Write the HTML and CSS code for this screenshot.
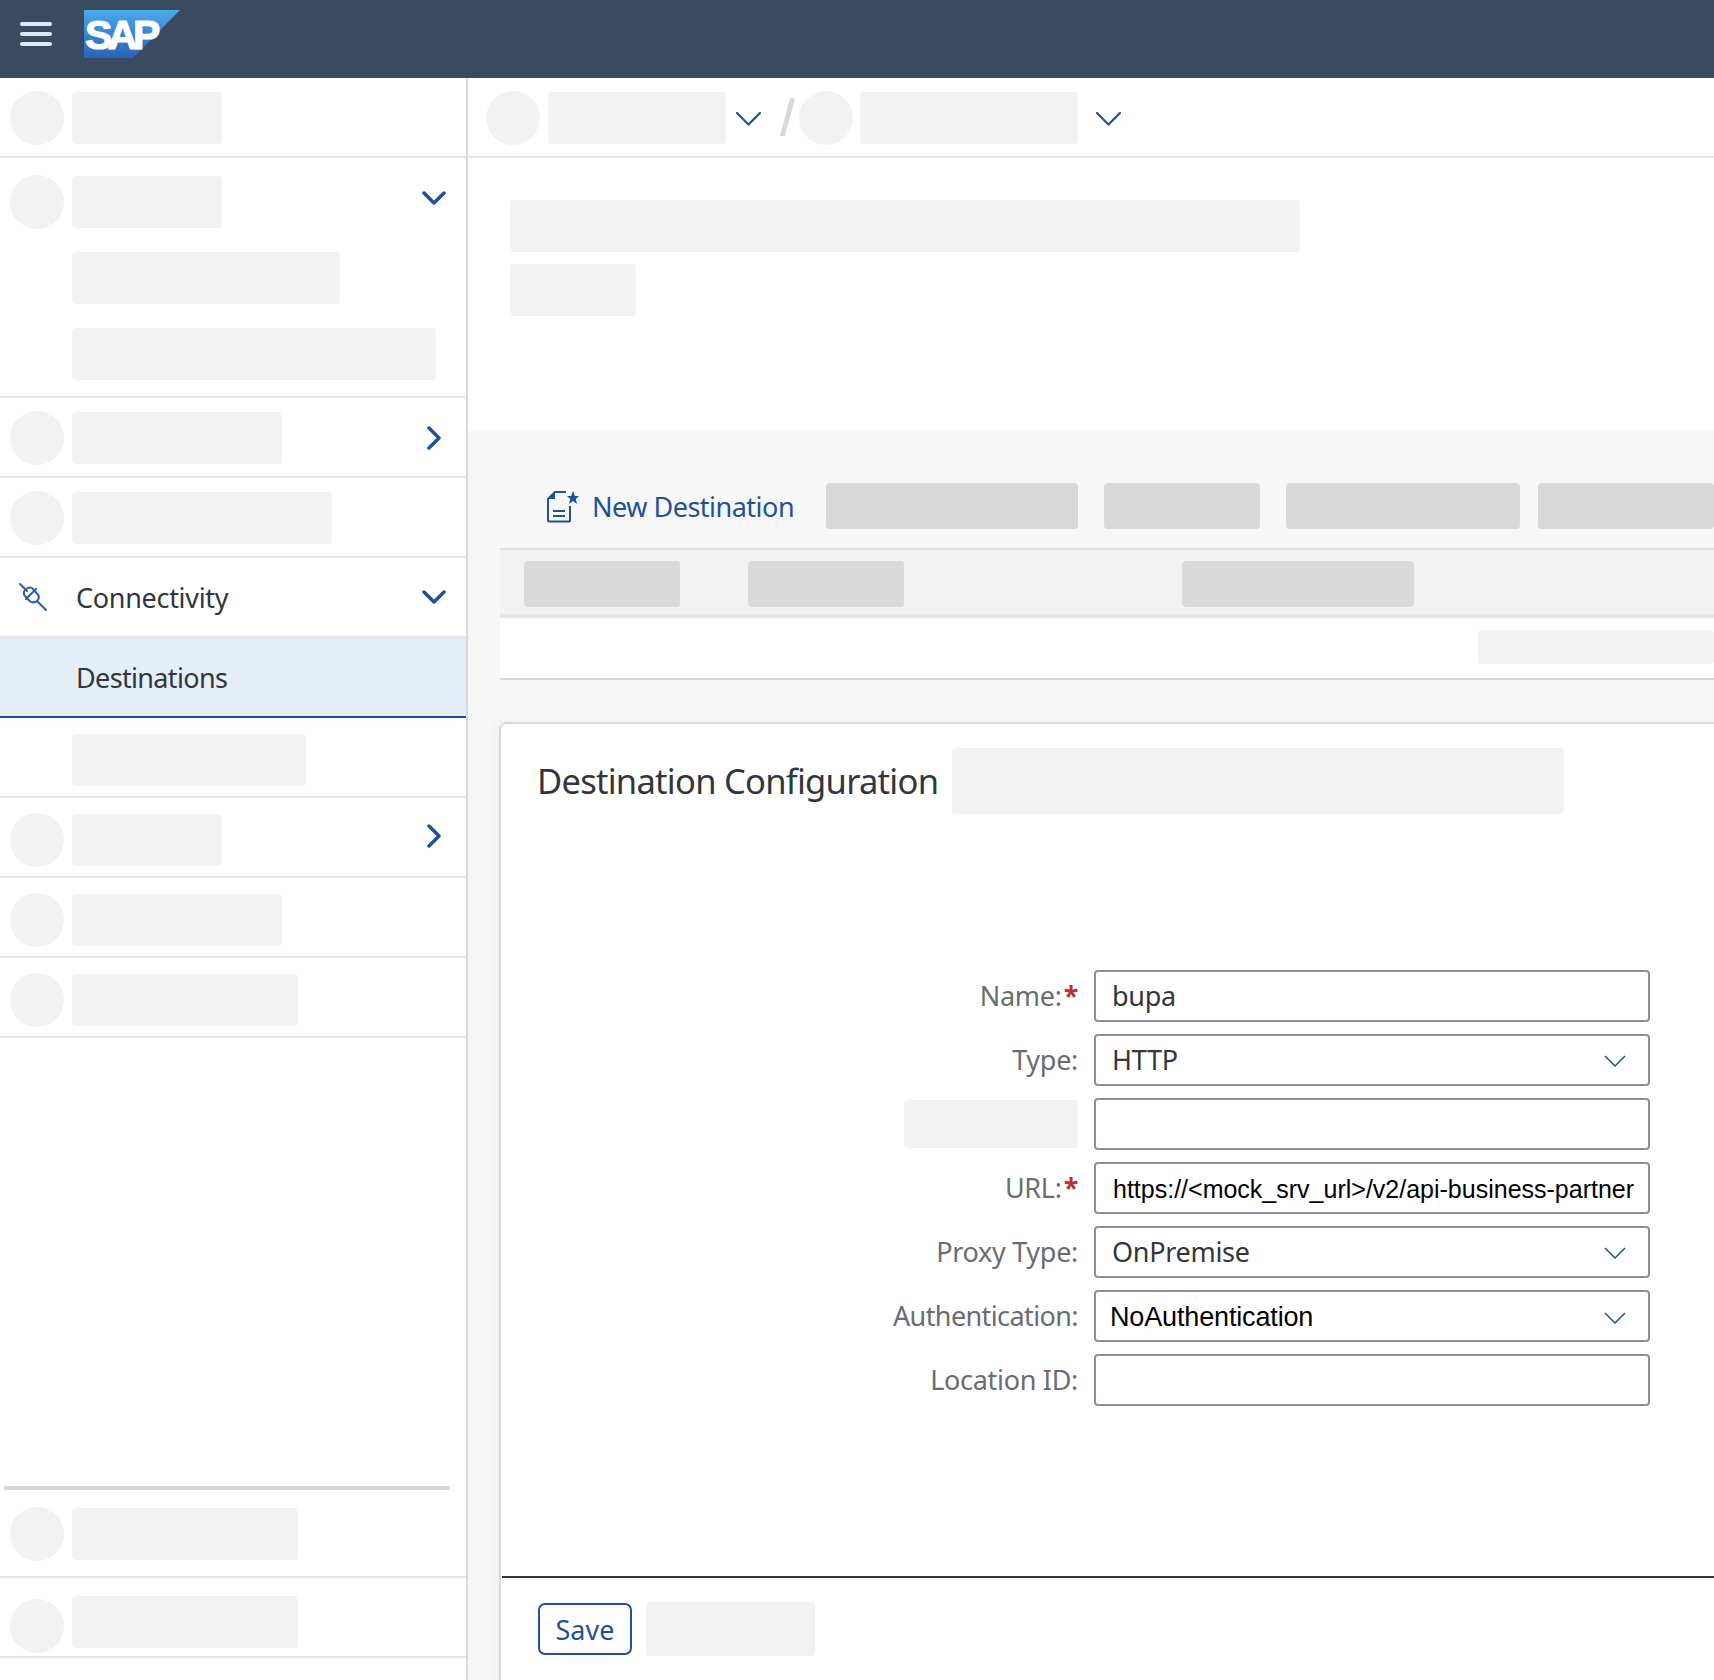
FILE: index.html
```html
<!DOCTYPE html>
<html lang="en">

<head>
    <meta charset="UTF-8">
    <meta name="viewport" content="width=device-width, initial-scale=1.0">
    <title>Destinations</title>
    <link rel="stylesheet" href="styles.css">
</head>

<body>

    <header class="shell-bar">
        <div class="menu-btn"><span></span><span></span><span></span></div>
        <div class="logo">
            <svg width="96" height="48" viewBox="0 0 96 48">
                <defs>
                    <linearGradient id="logoFill" x1="0" y1="0" x2="0" y2="1">
                        <stop offset="0" stop-color="#4aa9e9"></stop>
                        <stop offset="1" stop-color="#2b62b8"></stop>
                    </linearGradient>
                </defs>
                <polygon points="0,0 96,0 49,48 0,48" fill="url(#logoFill)"></polygon>
                <text class="logo-text" x="1" y="38.500">SAP</text>
            </svg>
        </div>
    </header>

    <div class="layout">
        <nav class="sidebar">
            <div class="nav-row">
                <span class="dot"></span><span class="ph w150"></span>
            </div>
            <div class="nav-group">
                <div class="nav-head">
                    <span class="dot"></span><span class="ph w150"></span>
                    <svg class="nav-arrow" width="24" height="14" viewBox="0 0 24 14"><path d="M2 2l10 10L22 2"></path></svg>
                </div>
                <div class="nav-sub"><span class="ph w268"></span></div>
                <div class="nav-sub"><span class="ph w364"></span></div>
            </div>
            <div class="nav-row">
                <span class="dot"></span><span class="ph w210"></span>
                <svg class="nav-arrow nav-arrow-right" width="14" height="24" viewBox="0 0 14 24"><path d="M2 2l10 10L2 22"></path></svg>
            </div>
            <div class="nav-row">
                <span class="dot"></span><span class="ph w260"></span>
            </div>
            <div class="nav-row nav-open">
                <svg class="plug" width="30" height="30" viewBox="0 0 30 30">
                    <path d="M2 2l7 7M20 20l8 8"></path>
                    <path d="M9 6.5c-2.5 1.5-4 4-2.5 7l5 5.500c3 2 6 1.500 8-.5 2-2.500 1.500-5-.5-7L14 6c-1.500-1-3.500-.5-5 .5z"></path>
                    <path d="M8 17L18 7"></path>
                </svg>
                <span class="nav-text">Connectivity</span>
                <svg class="nav-arrow" width="24" height="14" viewBox="0 0 24 14"><path d="M2 2l10 10L22 2"></path></svg>
            </div>
            <div class="nav-row nav-active">
                <span class="nav-text">Destinations</span>
            </div>
            <div class="nav-row nav-low nav-child">
                <span class="ph w234"></span>
            </div>
            <div class="nav-row nav-low">
                <span class="dot"></span><span class="ph w150"></span>
                <svg class="nav-arrow nav-arrow-right" width="14" height="24" viewBox="0 0 14 24"><path d="M2 2l10 10L2 22"></path></svg>
            </div>
            <div class="nav-row nav-low">
                <span class="dot"></span><span class="ph w210"></span>
            </div>
            <div class="nav-row nav-low">
                <span class="dot"></span><span class="ph w226"></span>
            </div>

            <div class="nav-bottom">
                <div class="nav-divider"></div>
                <div class="nav-row">
                    <span class="dot"></span><span class="ph w226"></span>
                </div>
                <div class="nav-row">
                    <span class="dot"></span><span class="ph w226"></span>
                </div>
            </div>
        </nav>

        <main class="content">
            <div class="breadcrumb">
                <span class="dot"></span><span class="ph crumb-a"></span>
                <svg class="crumb-arrow" width="25" height="14" viewBox="0 0 25 14"><path d="M1 1l11.500 11.500L24 1"></path></svg>
                <span class="crumb-slash"></span>
                <span class="dot"></span><span class="ph crumb-b"></span>
                <svg class="crumb-arrow" width="25" height="14" viewBox="0 0 25 14"><path d="M1 1l11.500 11.500L24 1"></path></svg>
            </div>

            <div class="page-title">
                <span class="ph title-a"></span>
                <span class="ph title-b"></span>
            </div>

            <section class="page-body">
                <div class="actions">
                    <a class="new-link">
                        <svg width="33" height="33" viewBox="0 0 33 33">
                            <path class="doc" d="M20 2H9L2 9v21.500a1 1 0 0 0 1 1h20a1 1 0 0 0 1-1V16"></path>
                            <path class="doc-fold" d="M9 2L2 9h7z"></path>
                            <path class="doc" d="M7 21h12M7 26h12"></path>
                            <polygon class="doc-star" points="27,1 28.800,6 33,6 29.800,9 31,14 27,11 23,14 24.200,9 21,6 25.200,6"></polygon>
                        </svg>
                        <span>New Destination</span>
                    </a>
                    <span class="ph-dark act-a"></span>
                    <span class="ph-dark act-b"></span>
                    <span class="ph-dark act-c"></span>
                    <span class="ph-dark act-d"></span>
                </div>

                <div class="table-head">
                    <span class="ph-dark col-a"></span>
                    <span class="ph-dark col-b"></span>
                    <span class="ph-dark col-c"></span>
                </div>
                <div class="table-row">
                    <span class="ph row-a"></span>
                </div>

                <div class="card">
                    <div class="card-head">
                        <h2>Destination Configuration</h2>
                        <span class="ph card-ph"></span>
                    </div>

                    <form class="config-form">
                        <label>Name:<b>*</b></label>
                        <input class="field" type="text" value="bupa">

                        <label>Type:</label>
                        <div class="field select">
                            <span>HTTP</span>
                            <svg width="22" height="12" viewBox="0 0 22 12"><path d="M1 1l10 10L21 1"></path></svg>
                        </div>

                        <span class="ph label-ph"></span>
                        <input class="field" type="text">

                        <label>URL:<b>*</b></label>
                        <input class="field field-url" type="text" value="https://<mock_srv_url>/v2/api-business-partner">

                        <label>Proxy Type:</label>
                        <div class="field select">
                            <span>OnPremise</span>
                            <svg width="22" height="12" viewBox="0 0 22 12"><path d="M1 1l10 10L21 1"></path></svg>
                        </div>

                        <label class="label-tight">Authentication:</label>
                        <div class="field select select-auth">
                            <span>NoAuthentication</span>
                            <svg width="22" height="12" viewBox="0 0 22 12"><path d="M1 1l10 10L21 1"></path></svg>
                        </div>

                        <label>Location ID:</label>
                        <input class="field" type="text">
                    </form>

                    <div class="card-foot">
                        <button class="save-btn" type="button">Save</button>
                        <span class="ph foot-ph"></span>
                    </div>
                </div>
            </section>
        </main>
    </div>

</body>

</html>
```

FILE: styles.css
```css
html,
body {
    margin: 0;
    height: 1680px;
    overflow: hidden;
    background: #fff;
}

body {
    font-family: "Noto Sans", "Open Sans", Arial, sans-serif;
    color: #32363a;
}

/* top bar */
.shell-bar {
    display: flex;
    height: 78px;
    background: #3a4a5f;
}

.menu-btn {
    display: flex;
    flex-direction: column;
    gap: 6px;
    width: 32px;
    margin: 22px 0 0 20px;
}

.menu-btn span {
    height: 4px;
    border-radius: 2px;
    background: #dbe8f8;
}

.logo {
    margin: 10px 0 0 32px;
}

.logo svg {
    display: block;
}

.logo-text {
    font-family: "Liberation Sans", Arial, sans-serif;
    font-size: 41px;
    font-weight: bold;
    letter-spacing: -4.5px;
    fill: #fff;
    stroke: #fff;
    stroke-width: 1.2px;
}

.layout {
    display: flex;
    height: 1602px;
}

/* placeholders */
.dot {
    flex: none;
    width: 54px;
    height: 54px;
    border-radius: 50%;
    background: #f2f2f2;
}

.ph,
.ph-dark {
    display: block;
    flex: none;
    height: 52px;
    border-radius: 4px;
    background: #f2f2f2;
}

.ph-dark {
    height: 46px;
    background: #d9d9d9;
}

.w150 { width: 150px; }
.w210 { width: 210px; }
.w226 { width: 226px; }
.w234 { width: 234px; }
.w260 { width: 260px; }
.w268 { width: 268px; }
.w364 { width: 364px; }

/* side navigation */
.sidebar {
    position: relative;
    flex: none;
    width: 466px;
    border-right: 2px solid #d9d9d9;
}

.nav-row {
    display: flex;
    align-items: center;
    gap: 8px;
    box-sizing: border-box;
    height: 80px;
    padding: 2px 0 0 10px;
    border-bottom: 2px solid #e5e5e5;
}

.nav-low {
    padding-top: 6px;
}

.nav-low .nav-arrow {
    margin-bottom: 9px;
}

.nav-group {
    box-sizing: border-box;
    height: 240px;
    padding-top: 17px;
    border-bottom: 2px solid #e5e5e5;
}

.nav-head {
    display: flex;
    align-items: center;
    gap: 8px;
    margin-bottom: -1px;
    padding-left: 10px;
}

.nav-head .nav-arrow {
    margin-bottom: 8px;
}

.nav-sub {
    margin: 24px 0 0 72px;
}

.nav-arrow {
    margin-left: auto;
    margin-right: 20px;
    fill: none;
    stroke: #1f5199;
    stroke-width: 3.500;
    stroke-linecap: round;
    stroke-linejoin: round;
}

.nav-arrow-right {
    margin-right: 25px;
}

.nav-open {
    padding: 0 0 0 18px;
}

.plug {
    fill: none;
    stroke: #2a5ea8;
    stroke-width: 2;
    stroke-linecap: round;
}

.nav-text {
    font-size: 27px;
    letter-spacing: -0.3px;
}

.nav-open .nav-text {
    margin-left: 20px;
}

.nav-active {
    padding: 0 0 0 76px;
    background: #e5eef7;
    border-bottom-color: #1f5199;
}

.nav-active .nav-text {
    letter-spacing: -0.65px;
}

.nav-child {
    padding-left: 72px;
}

.nav-bottom {
    position: absolute;
    top: 1408px;
    left: 0;
    right: 0;
}

.nav-divider {
    width: 446px;
    height: 4px;
    margin-left: 4px;
    background: #d9d9d9;
}

.nav-bottom .nav-row {
    height: 88px;
}

.nav-bottom .nav-row + .nav-row {
    height: 80px;
    padding-top: 10px;
}

.nav-bottom .nav-row + .nav-row .dot {
    margin-top: 8px;
}

/* main area */
.content {
    flex: 1;
    min-width: 0;
    overflow: hidden;
}

.breadcrumb {
    display: flex;
    align-items: center;
    box-sizing: border-box;
    height: 80px;
    padding: 2px 0 0 18px;
    border-bottom: 2px solid #e5e5e5;
}

.crumb-a {
    width: 178px;
    margin-left: 8px;
}

.crumb-b {
    width: 218px;
    margin-left: 7px;
}

.crumb-arrow {
    flex: none;
    margin: 2px 0 0 10px;
    fill: none;
    stroke: #1f5199;
    stroke-width: 2.200;
    stroke-linecap: round;
}

.crumb-b + .crumb-arrow {
    margin-left: 18px;
}

.crumb-slash {
    flex: none;
    width: 5px;
    height: 38px;
    margin: 0 9px 2px 24px;
    background: #d9d9d9;
    transform: skewX(-15deg);
}

.page-title {
    box-sizing: border-box;
    height: 272px;
    padding: 42px 0 0 42px;
}

.title-a {
    width: 790px;
}

.title-b {
    width: 126px;
    margin-top: 12px;
}

.page-body {
    height: 1250px;
    padding-left: 32px;
    background: #f7f7f7;
}

.actions {
    display: flex;
    align-items: center;
    box-sizing: border-box;
    height: 118px;
    padding-top: 34px;
}

.new-link {
    display: flex;
    align-items: center;
    gap: 13px;
    width: 326px;
    padding-left: 46px;
    box-sizing: border-box;
    color: #1f5199;
    font-size: 27px;
    letter-spacing: -0.5px;
}

.new-link svg {
    flex: none;
}

.doc {
    fill: none;
    stroke: #1f5199;
    stroke-width: 2;
}

.doc-fold,
.doc-star {
    fill: #1f5199;
}

.act-a { width: 252px; margin-right: 26px; }
.act-b { width: 156px; margin-right: 26px; }
.act-c { width: 234px; margin-right: 18px; }
.act-d { width: 176px; }

.table-head {
    display: flex;
    align-items: center;
    box-sizing: border-box;
    height: 70px;
    padding: 4px 0 0 24px;
    background: #f2f2f2;
    border-top: 2px solid #e0e0e0;
    border-bottom: 4px solid #e5e5e5;
}

.col-a { width: 156px; margin-right: 68px; }
.col-b { width: 156px; margin-right: 278px; }
.col-c { width: 232px; }

.table-row {
    display: flex;
    align-items: center;
    justify-content: flex-end;
    box-sizing: border-box;
    height: 62px;
    padding-bottom: 2px;
    background: #fff;
    border-bottom: 2px solid #d9d9d9;
}

.row-a {
    width: 236px;
    height: 34px;
}

.card {
    position: relative;
    margin: 42px -12px 0 -1px;
    background: #fff;
    border: 2px solid #d9d9d9;
    border-radius: 8px 0 0 0;
    box-shadow: -4px 0 10px rgba(0, 0, 0, 0.04);
}

.card-head {
    display: flex;
    align-items: center;
    gap: 14px;
    padding: 24px 0 0 36px;
}

.card-head h2 {
    margin: 0 0 2px;
    font-size: 34.5px;
    font-weight: 400;
    letter-spacing: -0.73px;
}

.card-ph {
    width: 612px;
    height: 66px;
}

/* form */
.config-form {
    display: grid;
    grid-template-columns: 577px 556px;
    grid-auto-rows: 52px;
    gap: 12px 16px;
    margin-top: 156px;
}

.config-form label {
    align-self: center;
    padding-bottom: 2px;
    text-align: right;
    font-size: 27px;
    letter-spacing: -0.3px;
    color: #6a6d70;
}

.config-form .label-tight {
    letter-spacing: -0.6px;
}

.config-form label b {
    margin-left: 2px;
    color: #b83232;
    font-weight: 700;
}

.label-ph {
    justify-self: end;
    align-self: center;
    width: 174px;
    height: 48px;
}

.field {
    display: flex;
    align-items: center;
    justify-content: space-between;
    box-sizing: border-box;
    width: 556px;
    height: 52px;
    padding: 0 22px 2px 16px;
    border: 2px solid #89919a;
    border-radius: 4px;
    background: #fff;
    color: #32363a;
    font-family: "Noto Sans", "Open Sans", Arial, sans-serif;
    font-size: 27px;
    letter-spacing: -0.3px;
    outline: none;
}

.field svg {
    flex: none;
    margin-top: 4px;
    fill: none;
    stroke: #1f5199;
    stroke-width: 1.500;
}

.field-url {
    padding: 2px 4px 0 17px;
    color: #000;
    font-family: "Liberation Sans", Arial, sans-serif;
    font-size: 25px;
    letter-spacing: 0;
}

.select-auth {
    padding: 3px 22px 0 14px;
    color: #000;
    font-family: "Liberation Sans", Arial, sans-serif;
    font-size: 27px;
    letter-spacing: -0.15px;
}

.select-auth svg {
    margin-top: 0;
}

.card-foot {
    display: flex;
    align-items: center;
    gap: 14px;
    box-sizing: border-box;
    height: 106px;
    margin: 170px 0 0 1px;
    padding: 0 0 2px 36px;
    border-top: 2px solid #32363a;
}

.save-btn {
    box-sizing: border-box;
    width: 94px;
    height: 52px;
    padding: 0;
    border: 2px solid #1f5199;
    border-radius: 7px;
    background: #fff;
    color: #1f5199;
    font-family: "Noto Sans", "Open Sans", Arial, sans-serif;
    font-size: 27px;
}

.foot-ph {
    width: 169px;
    height: 54px;
}
```
